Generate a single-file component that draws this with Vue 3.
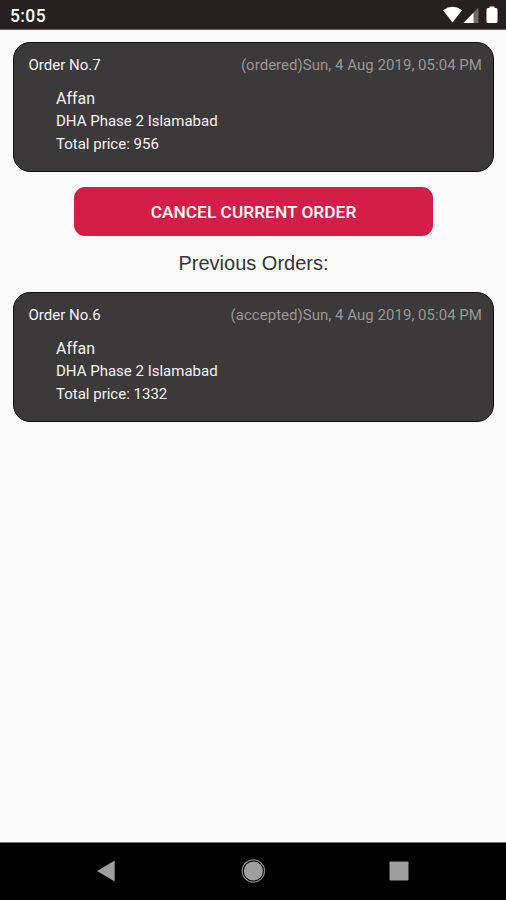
<template>
  <div class="screen">
    <header class="status-bar">
      <span class="clock">5:05</span>
      <svg class="status-icons" width="58" height="20" viewBox="0 0 58 20">
        <path d="M1 4.200Q10.500 -2.600 20 4.200L10.500 16.600Z" fill="#fff" />
        <path d="M36.500 1.500V17H21.500Z" fill="#6f6b6b" />
        <path d="M31.500 6.700V17H21.500Z" fill="#fff" />
        <path d="M47.500 0.500H52.500V2H54Q55.500 2 55.500 3.500V15.500Q55.500 17 54 17H46Q44.500 17 44.500 15.500V3.500Q44.500 2 46 2H47.500Z" fill="#fff" />
      </svg>
    </header>

    <main class="content">
      <section v-for="order in currentOrders" :key="order.number" class="order-card">
        <div class="order-head">
          <span class="order-number">Order No.{{ order.number }}</span>
          <span class="order-date">({{ order.status }}){{ order.date }}</span>
        </div>
        <div class="order-body">
          <div class="customer">{{ order.name }}</div>
          <div>{{ order.address }}</div>
          <div>Total price: {{ order.price }}</div>
        </div>
      </section>

      <button class="btn-cancel" @click="cancelOrder">CANCEL CURRENT ORDER</button>

      <h2 class="list-title">Previous Orders:</h2>

      <section v-for="order in previousOrders" :key="order.number" class="order-card">
        <div class="order-head">
          <span class="order-number">Order No.{{ order.number }}</span>
          <span class="order-date">({{ order.status }}){{ order.date }}</span>
        </div>
        <div class="order-body">
          <div class="customer">{{ order.name }}</div>
          <div>{{ order.address }}</div>
          <div>Total price: {{ order.price }}</div>
        </div>
      </section>
    </main>

    <nav class="nav-bar">
      <svg width="24" height="24" viewBox="0 0 24 24">
        <path d="M3 12L20.700 1.600V22.400Z" fill="#9e9e9e" />
      </svg>
      <svg width="24" height="24" viewBox="0 0 24 24">
        <circle cx="12.400" cy="12" r="11.200" fill="none" stroke="#8c8c8c" stroke-width="1.200" />
        <circle cx="12.400" cy="12" r="9.600" fill="#9e9e9e" />
      </svg>
      <svg width="24" height="24" viewBox="0 0 24 24">
        <rect x="2.500" y="2.500" width="19" height="19" rx="1" fill="#9e9e9e" />
      </svg>
    </nav>
  </div>
</template>

<script setup>
import { ref } from 'vue'

const currentOrders = ref([
  { number: 7, status: 'ordered', date: 'Sun, 4 Aug 2019, 05:04 PM', name: 'Affan', address: 'DHA Phase 2 Islamabad', price: 956 }
])

const previousOrders = ref([
  { number: 6, status: 'accepted', date: 'Sun, 4 Aug 2019, 05:04 PM', name: 'Affan', address: 'DHA Phase 2 Islamabad', price: 1332 }
])

const cancelOrder = () => {
  currentOrders.value = []
}
</script>

<style>
body {
  margin: 0;
  background: #fafafa;
}
</style>

<style scoped>
.screen {
  display: flex;
  flex-direction: column;
  height: 900px;
  overflow: hidden;
  background: #fafafa;
  font-family: Roboto, sans-serif;
}
.status-bar {
  box-sizing: border-box;
  display: flex;
  justify-content: space-between;
  height: 30px;
  padding: 6px 6px 0 10px;
  background: #262020;
  border-bottom: 1px solid #6a6464;
}
.clock {
  color: #fff;
  font-size: 17.5px;
  font-weight: 500;
  line-height: 20px;
  letter-spacing: 0.4px;
}
.content {
  flex: 1;
  padding: 12px 12px 0 13px;
}
.order-card {
  box-sizing: border-box;
  height: 130px;
  padding: 12px 11px 0 14.5px;
  background: #3c393a;
  border: 1px solid #111;
  border-radius: 17px;
}
.order-head {
  display: flex;
  justify-content: space-between;
  line-height: 21px;
  white-space: nowrap;
}
.order-number {
  color: #f2f2f2;
  font-size: 15px;
}
.order-date {
  color: #999795;
  font-size: 15px;
  letter-spacing: 0.03px;
}
.order-body {
  padding: 11px 0 0 27.5px;
  color: #f2f2f2;
  font-size: 15px;
  line-height: 23px;
}
.customer {
  font-size: 16px;
}
.btn-cancel {
  display: block;
  width: 359px;
  height: 49px;
  margin: 15px 0 0 61px;
  padding: 0;
  background: #d21e48;
  border: none;
  border-radius: 11px;
  color: #fff;
  font-family: inherit;
  font-size: 17.35px;
  font-weight: 500;
  cursor: pointer;
}
.list-title {
  margin: 14px 0 16px;
  color: #333;
  font-family: "Liberation Sans", Arial, sans-serif;
  font-size: 20px;
  font-weight: 400;
  line-height: 26px;
  text-align: center;
}
.nav-bar {
  box-sizing: border-box;
  display: flex;
  justify-content: space-between;
  height: 58px;
  padding: 16px 95px 0 94px;
  background: #000;
  border-top: 1px solid #777;
}
</style>
